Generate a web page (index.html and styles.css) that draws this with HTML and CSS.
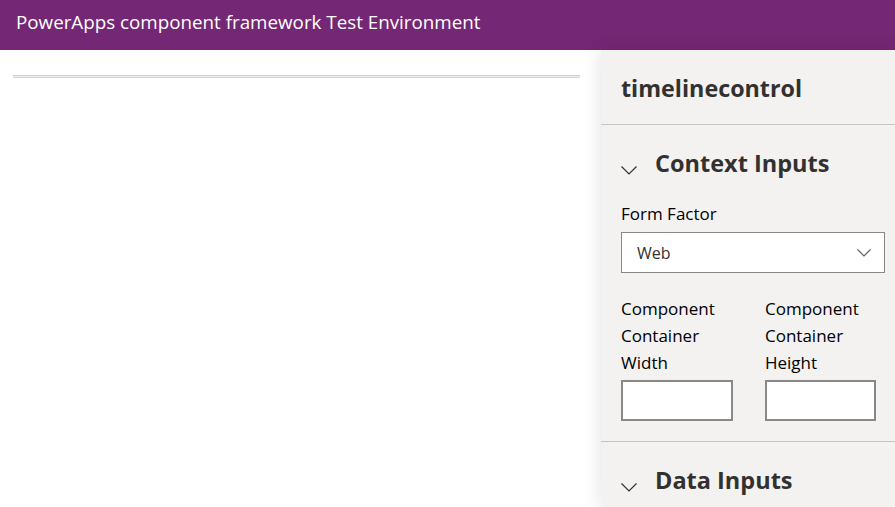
FILE: index.html
```html
<!DOCTYPE html>
<html>
<head>
<meta charset="utf-8">
<link rel="stylesheet" href="styles.css">
</head>
<body>
<header class="topbar">PowerApps component framework Test Environment</header>
<div class="main">
  <div class="canvas">
    <div class="rule"></div>
  </div>
  <aside class="panel">
    <div class="panel-title">timelinecontrol</div>
    <section class="section">
      <div class="section-head">
        <svg class="chev" width="16" height="9" viewBox="0 0 16 9"><path d="M0.5 0.5 L8 8 L15.5 0.5" fill="none" stroke="#323130" stroke-width="1.2"/></svg>
        <span>Context Inputs</span>
      </div>
      <div class="field-label">Form Factor</div>
      <div class="dropdown">
        <span>Web</span>
        <svg width="14" height="8" viewBox="0 0 14 8"><path d="M0.5 0.5 L7 7 L13.5 0.5" fill="none" stroke="#605e5c" stroke-width="1.1"/></svg>
      </div>
      <div class="size-grid">
        <div class="size-field">
          <div class="size-label">Component Container Width</div>
          <div class="textbox"></div>
        </div>
        <div class="size-field">
          <div class="size-label">Component Container Height</div>
          <div class="textbox"></div>
        </div>
      </div>
    </section>
    <section class="section">
      <div class="section-head">
        <svg class="chev" width="16" height="9" viewBox="0 0 16 9"><path d="M0.5 0.5 L8 8 L15.5 0.5" fill="none" stroke="#323130" stroke-width="1.2"/></svg>
        <span>Data Inputs</span>
      </div>
    </section>
  </aside>
</div>
</body>
</html>
```
FILE: styles.css
```css
html, body {
  margin: 0;
  padding: 0;
  height: 100%;
  overflow: hidden;
  font-family: "Open Sans", "Noto Sans", sans-serif;
  color: #000;
  background: #fff;
}
.topbar {
  height: 50px;
  box-sizing: border-box;
  background: #742774;
  color: #fff;
  font-size: 18.8px;
  padding-left: 16px;
  display: flex;
  align-items: center;
  padding-bottom: 6px;
}
.main {
  display: flex;
  height: 457px;
}
.canvas {
  flex: 1;
  padding: 25px 21px 0 13px;
}
.rule {
  height: 1px;
  border-top: 1px solid #cfcfcf;
  border-bottom: 1px solid #d6d6d6;
  background: #eeeeee;
}
.panel {
  width: 294px;
  background: #f3f2f1;
  box-shadow: 0 0 18px rgba(0,0,0,0.12);
  overflow: hidden;
  position: relative;
}
.panel-title {
  height: 75px;
  box-sizing: border-box;
  border-bottom: 1px solid #c8c6c4;
  padding-left: 20px;
  padding-top: 2px;
  display: flex;
  align-items: center;
  font-size: 23.3px;
  font-weight: 700;
  color: #323130;
}
.section {
  padding: 0 10px 20px 20px;
  border-bottom: 1px solid #c8c6c4;
}
.section-head {
  height: 76px;
  display: flex;
  align-items: center;
  font-size: 23.5px;
  font-weight: 700;
  color: #323130;
}
.chev {
  margin-top: 14px;
  margin-right: 18px;
}
.field-label {
  font-size: 17px;
  margin-top: -1px;
  height: 32px;
  line-height: 27px;
}
.dropdown {
  height: 41px;
  box-sizing: border-box;
  border: 1px solid #8a8886;
  background: #fff;
  display: flex;
  align-items: center;
  justify-content: space-between;
  padding: 0 13px 0 15px;
  font-size: 16px;
  color: #323130;
}
.size-grid {
  display: grid;
  grid-template-columns: 144px 1fr;
  margin-top: 22px;
}
.size-label {
  font-size: 17px;
  line-height: 27px;
  width: 110px;
  margin-bottom: 4px;
}
.textbox {
  width: 112px;
  height: 41px;
  box-sizing: border-box;
  border: 2px solid #8a8886;
  background: #fff;
}
.size-field:last-child .textbox {
  width: 111px;
}
```
